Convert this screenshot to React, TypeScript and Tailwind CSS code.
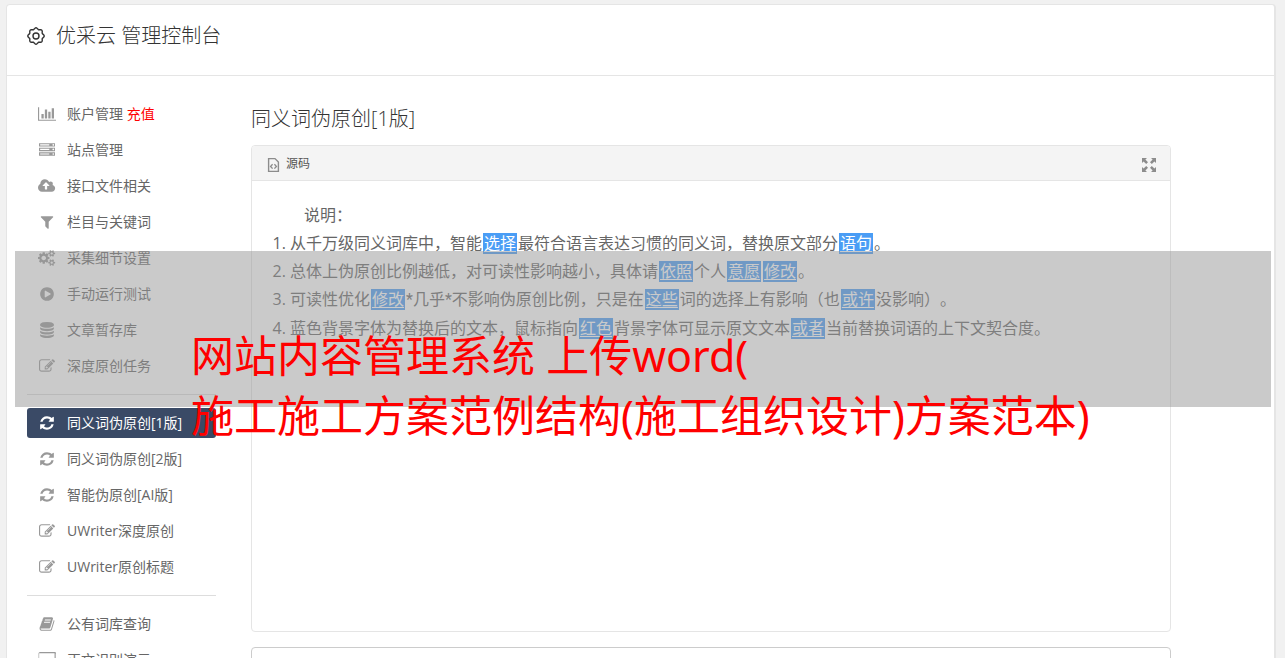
import React from "react";

type IconProps = { d: string; w?: number };

// Solid glyph icons, drawn on a 1792 unit high grid
const ICONS: Record<string, IconProps> = {
  chart: {
    w: 2048,
    d: "M640 896v512h-256v-512h256zm384-512v1024h-256v-1024h256zm1024 1152v128h-2048v-1536h128v1408h1920zm-640-896v768h-256v-768h256zm384-384v1152h-256v-1152h256z",
  },
  server: {
    d: "M128 1408h1024v-128h-1024v128zm0-512h1024v-128h-1024v128zm1568 448q0-40-28-68t-68-28-68 28-28 68 28 68 68 28 68-28 28-68zm-1568-960h1024v-128h-1024v128zm1568 448q0-40-28-68t-68-28-68 28-28 68 28 68 68 28 68-28 28-68zm0-512q0-40-28-68t-68-28-68 28-28 68 28 68 68 28 68-28 28-68zm96 832v384h-1792v-384h1792zm0-512v384h-1792v-384h1792zm0-512v384h-1792v-384h1792z",
  },
  upload: {
    w: 1920,
    d: "M1280 864q0-14-9-23l-352-352q-9-9-23-9t-23 9l-351 351q-10 12-10 24 0 14 9 23t23 9h224v352q0 13 9.5 22.5t22.5 9.5h192q13 0 22.5-9.5t9.5-22.5v-352h224q13 0 22.5-9.5t9.5-22.5zm640 288q0 159-112.5 271.5t-271.5 112.5h-1088q-185 0-316.5-131.5t-131.5-316.5q0-130 70-240t188-165q-2-30-2-43 0-212 150-362t362-150q156 0 285.5 87t188.5 231q71-62 166-62 106 0 181 75t75 181q0 76-41 138 130 31 213.5 135.5t83.5 238.5z",
  },
  filter: {
    d: "M1595 295q17 41-14 70l-493 493v742q0 42-39 59-13 5-25 5-27 0-45-19l-256-256q-19-19-19-45v-486l-493-493q-31-29-14-70 17-39 59-39h1280q42 0 59 39z",
  },
  cogs: {
    w: 1920,
    d: "M896 896q0-106-75-181t-181-75-181 75-75 181 75 181 181 75 181-75 75-181zm768 512q0-52-38-90t-90-38-90 38-38 90q0 53 37.5 90.5t90.5 37.5 90.5-37.5 37.5-90.5zm0-1024q0-52-38-90t-90-38-90 38-38 90q0 53 37.5 90.5t90.5 37.5 90.5-37.5 37.5-90.5zm-384 421v185q0 10-7 19.5t-16 10.5l-155 24q-11 35-32 76 34 48 90 115 7 11 7 20 0 12-7 19-23 30-82.5 89.5t-78.5 59.5q-11 0-21-7l-115-90q-37 19-77 31-11 108-23 155-7 24-30 24h-186q-11 0-20-7.5t-10-17.5l-23-153q-34-10-75-31l-118 89q-7 7-20 7-11 0-21-8-144-133-144-160 0-9 7-19 10-14 41-53t47-61q-23-44-35-82l-152-24q-10-1-17-9.5t-7-19.5v-185q0-10 7-19.5t16-10.5l155-24q11-35 32-76-34-48-90-115-7-11-7-20 0-12 7-20 22-30 82-89t79-59q11 0 21 7l115 90q34-18 77-32 11-108 23-154 7-24 30-24h186q11 0 20 7.5t10 17.5l23 153q34 10 75 31l118-89q8-7 20-7 11 0 21 8 144 133 144 160 0 8-7 19-12 16-42 54t-45 60q23 48 34 82l152 23q10 2 17 10.5t7 19.5zm640 533v140q0 16-149 31-12 27-30 52 51 113 51 138 0 4-4 7-122 71-124 71-8 0-46-47t-52-68q-20 2-30 2t-30-2q-14 21-52 68t-46 47q-2 0-124-71-4-3-4-7 0-25 51-138-18-25-30-52-149-15-149-31v-140q0-16 149-31 13-29 30-52-51-113-51-138 0-4 4-7 4-2 35-20t59-34 30-16q8 0 46 46.5t52 67.5q20-2 30-2t30 2q51-71 92-112l6-2q4 0 124 70 4 3 4 7 0 25-51 138 17 23 30 52 149 15 149 31zm0-1024v140q0 16-149 31-12 27-30 52 51 113 51 138 0 4-4 7-122 71-124 71-8 0-46-47t-52-68q-20 2-30 2t-30-2q-14 21-52 68t-46 47q-2 0-124-71-4-3-4-7 0-25 51-138-18-25-30-52-149-15-149-31v-140q0-16 149-31 13-29 30-52-51-113-51-138 0-4 4-7 4-2 35-20t59-34 30-16q8 0 46 46.5t52 67.5q20-2 30-2t30 2q51-71 92-112l6-2q4 0 124 70 4 3 4 7 0 25-51 138 17 23 30 52 149 15 149 31z",
  },
  play: {
    d: "M896 128q209 0 385.5 103t279.5 279.5 103 385.5-103 385.5-279.5 279.5-385.5 103-385.5-103-279.5-279.5-103-385.5 103-385.5 279.5-279.5 385.5-103zm384 823q32-18 32-55t-32-55l-544-320q-31-19-64-1-32 19-32 56v640q0 37 32 56 16 8 32 8 17 0 32-9z",
  },
  database: {
    d: "M896 768q237 0 443-43t325-127v170q0 69-103 128t-280 93.5-385 34.5-385-34.5-280-93.5-103-128v-170q119 84 325 127t443 43zm0 768q237 0 443-43t325-127v170q0 69-103 128t-280 93.5-385 34.5-385-34.5-280-93.5-103-128v-170q119 84 325 127t443 43zm0-384q237 0 443-43t325-127v170q0 69-103 128t-280 93.5-385 34.5-385-34.5-280-93.5-103-128v-170q119 84 325 127t443 43zm0-1152q208 0 385 34.5t280 93.5 103 128v128q0 69-103 128t-280 93.5-385 34.5-385-34.5-280-93.5-103-128v-128q0-69 103-128t280-93.5 385-34.5z",
  },
  edit: {
    d: "M888 1184l116-116-152-152-116 116v56h96v96h56zm440-720q-16-16-33 1l-350 350q-17 17-1 33t33-1l350-350q17-17 1-33zm80 594v190q0 119-84.5 203.5t-203.5 84.5h-832q-119 0-203.5-84.5t-84.5-203.5v-832q0-119 84.5-203.5t203.5-84.5h832q63 0 117 25 15 7 18 23 3 17-9 29l-49 49q-14 14-32 8-23-6-45-6h-832q-66 0-113 47t-47 113v832q0 66 47 113t113 47h832q66 0 113-47t47-113v-126q0-13 9-22l64-64q15-15 35-7t20 29zm-96-738l288 288-672 672h-288v-288zm444 132l-92 92-288-288 92-92q28-28 68-28t68 28l152 152q28 28 28 68t-28 68z",
  },
  refresh: {
    d: "M1639 1056q0 5-1 7-64 268-268 434.5t-478 166.5q-146 0-282.5-55t-243.5-157l-129 129q-19 19-45 19t-45-19-19-45v-448q0-26 19-45t45-19h448q26 0 45 19t19 45-19 45l-137 137q71 66 161 102t187 36q134 0 250-65t186-179q11-17 53-117 8-23 30-23h192q13 0 22.5 9.5t9.5 22.5zm25-800v448q0 26-19 45t-45 19h-448q-26 0-45-19t-19-45 19-45l138-138q-148-137-349-137-134 0-250 65t-186 179q-11 17-53 117-8 23-30 23h-199q-13 0-22.5-9.5t-9.5-22.5v-7q65-268 270-434.5t480-166.5q146 0 284 55.5t245 156.5l130-129q19-19 45-19t45 19 19 45z",
  },
  book: {
    d: "M1703 478q40 57 18 129l-275 906q-19 64-76.5 107.5t-122.5 43.5h-923q-77 0-148.5-53.5t-99.5-131.5q-24-67-2-127 0-4 3-27t4-37q1-8-3-21.5t-3-19.5q2-11 8-21t16.5-23.5 16.5-23.5q23-38 45-91.5t30-91.5q3-10 .5-30t-.5-28q3-11 17-28t17-23q21-36 42-92t25-90q1-9-2.5-32t.5-28q4-13 22-30.5t22-22.5q19-26 42.5-84.5t27.5-96.5q1-8-3-25.5t-2-26.5q2-8 9-18t18-23 17-21q8-12 16.5-30.5t15-35 16-36 19.5-32 26.5-23.5 36-11.5 47.5 5.5l-1 3q38-9 51-9h761q74 0 114 56t18 130l-274 906q-36 119-71.5 153.5t-128.5 34.5h-869q-27 0-38 15-11 16-1 43 24 70 144 70h923q29 0 56-15.5t35-41.5l300-987q7-22 5-57 38 15 59 43zm-1064 2q-4 13 2 22.5t20 9.5h608q13 0 25.5-9.5t16.5-22.5l21-64q4-13-2-22.5t-20-9.5h-608q-13 0-25.5 9.5t-16.5 22.5zm-83 256q-4 13 2 22.5t20 9.5h608q13 0 25.5-9.5t16.5-22.5l21-64q4-13-2-22.5t-20-9.5h-608q-13 0-25.5 9.5t-16.5 22.5z",
  },
  desktop: {
    w: 1984,
    d: "M1856 992v-832q0-13-9.5-22.5t-22.5-9.5h-1664q-13 0-22.5 9.5t-9.5 22.5v832q0 13 9.5 22.5t22.5 9.5h1664q13 0 22.5-9.5t9.5-22.5zm128-832v1088q0 66-47 113t-113 47h-544q0 37 16 77.5t32 71 16 43.5q0 26-19 45t-45 19h-512q-26 0-45-19t-19-45q0-14 16-44t32-70 16-78h-544q-66 0-113-47t-47-113v-1088q0-66 47-113t113-47h1664q66 0 113 47t47 113z",
  },
};

const NavIcon = ({ name }: { name: string }) => {
  const icon = ICONS[name];
  return (
    <span className="w-5 flex justify-center shrink-0">
      <svg
        viewBox={`0 0 ${icon.w || 1792} 1792`}
        className="h-4 w-auto"
        fill="currentColor"
        aria-hidden="true"
      >
        <path d={icon.d} />
      </svg>
    </span>
  );
};

// Wavy outline with eight lobes
const gearPoints = Array.from({ length: 96 }, (_, i) => {
  const a = (i / 96) * Math.PI * 2;
  const r = 7.5 + 0.7 * Math.cos(a * 8);
  return `${(9 + r * Math.cos(a)).toFixed(2)},${(9 + r * Math.sin(a)).toFixed(2)}`;
}).join(" ");

const GearIcon = () => (
  <svg
    width="18"
    height="18"
    viewBox="0 0 18 18"
    fill="none"
    stroke="#333"
    strokeWidth="1.4"
    aria-hidden="true"
  >
    <polygon points={gearPoints} />
    <circle cx="9" cy="9" r="3" />
  </svg>
);

const NAV_GROUPS = [
  [
    { icon: "chart", label: "账户管理", extra: "充值" },
    { icon: "server", label: "站点管理" },
    { icon: "upload", label: "接口文件相关" },
    { icon: "filter", label: "栏目与关键词" },
    { icon: "cogs", label: "采集细节设置" },
    { icon: "play", label: "手动运行测试" },
    { icon: "database", label: "文章暂存库" },
    { icon: "edit", label: "深度原创任务" },
  ],
  [
    { icon: "refresh", label: "同义词伪原创[1版]", active: true },
    { icon: "refresh", label: "同义词伪原创[2版]" },
    { icon: "refresh", label: "智能伪原创[AI版]" },
    { icon: "edit", label: "UWriter深度原创" },
    { icon: "edit", label: "UWriter原创标题" },
  ],
  [
    { icon: "book", label: "公有词库查询" },
    { icon: "desktop", label: "正文识别演示" },
  ],
] as { icon: string; label: string; extra?: string; active?: boolean }[][];

const Mark = ({ children }: { children: React.ReactNode }) => (
  <span className="inline-block h-[21px] leading-[21px] px-px mx-px bg-[#4a9df5] text-white underline underline-offset-2">
    {children}
  </span>
);

const Star = () => <span className="font-['Roboto']">*</span>;

const Sidebar = () => (
  <nav className="w-[189px] shrink-0 text-sm">
    {NAV_GROUPS.map((group, i) => (
      <React.Fragment key={i}>
        {i > 0 && <hr className="my-[13px] border-[#ddd]" />}
        <ul className="flex flex-col gap-1.5">
          {group.map((item) => (
            <li key={item.label}>
              <a
                href="#"
                className={`flex items-center gap-2.5 h-[30px] pl-2.5 rounded-[3px] whitespace-nowrap ${
                  item.active ? "bg-[#3a4a66] text-white" : "text-[#666]"
                }`}
              >
                <span className={item.active ? "text-white" : "text-[#999]"}>
                  <NavIcon name={item.icon} />
                </span>
                <span>
                  {item.label}
                  {item.extra && (
                    <span className="text-[#f00]"> {item.extra}</span>
                  )}
                </span>
              </a>
            </li>
          ))}
        </ul>
      </React.Fragment>
    ))}
  </nav>
);

const Editor = () => (
  <section className="border border-[#e5e5e5] rounded-[4px] overflow-hidden">
    <div className="h-[35px] px-[14px] flex items-center justify-between bg-[#f4f4f4] border-b border-[#e5e5e5]">
      <button
        type="button"
        className="flex items-center gap-1.5 pt-0.5 text-xs text-[#555]"
      >
        <svg
          width="14"
          height="16"
          viewBox="0 0 14 16"
          fill="none"
          stroke="#8c8c8c"
          strokeWidth="1.4"
          className="mt-0.5"
          aria-hidden="true"
        >
          <path d="M2.6 1.6H9l3.4 3.4v9.4H2.6z" />
          <path d="M6.6 7.2L4.6 9.4l2 2.2M8.4 7.2l2 2.2-2 2.2" />
        </svg>
        源码
      </button>
      <button type="button" aria-label="全屏">
        <svg
          width="14"
          height="14"
          viewBox="0 0 14 14"
          fill="#8c8c8c"
          className="mt-1"
          aria-hidden="true"
        >
          <path d="M0 0h5L3.4 1.6 6 4.2 4.2 6 1.6 3.4 0 5z" />
          <path d="M14 0v5l-1.6-1.6L9.8 6 8 4.2l2.6-2.6L9 0z" />
          <path d="M0 14V9l1.6 1.6L4.2 8 6 9.8l-2.6 2.6L5 14z" />
          <path d="M14 14H9l1.6-1.6L8 9.8 9.8 8l2.6 2.6L14 9z" />
        </svg>
      </button>
    </div>
    <div className="min-h-[450px] px-5 pt-5 text-base leading-7 text-[#666] [text-spacing-trim:space-all]">
      <p className="indent-8">说明：</p>
      <ol className="list-decimal pl-[18px]">
        <li>
          从千万级同义词库中，智能<Mark>选择</Mark>
          最符合语言表达习惯的同义词，替换原文部分<Mark>语句</Mark>。
        </li>
        <li>
          总体上伪原创比例越低，对可读性影响越小，具体请<Mark>依照</Mark>个人
          <Mark>意愿</Mark>
          <Mark>修改</Mark>。
        </li>
        <li>
          可读性优化<Mark>修改</Mark>
          <Star />
          几乎
          <Star />
          不影响伪原创比例，只是在
          <Mark>这些</Mark>词的选择上有影响（也<Mark>或许</Mark>没影响）。
        </li>
        <li>
          蓝色背景字体为替换后的文本，鼠标指向<Mark>红色</Mark>
          背景字体可显示原文文本<Mark>或者</Mark>当前替换词语的上下文契合度。
        </li>
      </ol>
    </div>
  </section>
);

const App = () => {
  return (
    <div className="relative h-screen overflow-hidden bg-[#f1f1f1] pt-1 pl-1.5 pr-[9px] font-['Open_Sans','Noto_Sans_CJK_SC',sans-serif]">
      <div className="bg-white border border-r-2 border-[#e5e5e5] rounded-[4px]">
        <header className="h-[71px] pl-5 pb-2 flex items-center gap-[11px] border-b border-[#e5e5e5]">
          <GearIcon />
          <h1 className="text-xl font-light text-[#333]">优采云 管理控制台</h1>
        </header>

        <div className="flex gap-[35px] pl-5 pr-[103px] pt-[23px]">
          <Sidebar />
          <main className="flex-1 min-w-0 pt-1.5">
            <h2 className="text-xl leading-7 font-light text-[#333] mb-3">
              同义词伪原创[1版]
            </h2>
            <Editor />
            <textarea
              aria-label="原文"
              className="block w-full h-40 mt-[15px] p-2 border border-[#ccc] rounded-[4px] resize-none"
            />
          </main>
        </div>
      </div>

      {/* Caption banner over the page */}
      <div className="absolute top-[251px] left-[15px] right-[14px] h-[156px] pt-[75px] pl-44 bg-[#969696]/50">
        <p className="font-['Noto_Sans','Noto_Sans_CJK_SC',sans-serif] text-[43px] leading-[60px] text-[#f00] whitespace-nowrap">
          网站内容管理系统 上传word(
          <br />
          施工施工方案范例结构(施工组织设计)方案范本)
        </p>
      </div>
    </div>
  );
};

export default App;
